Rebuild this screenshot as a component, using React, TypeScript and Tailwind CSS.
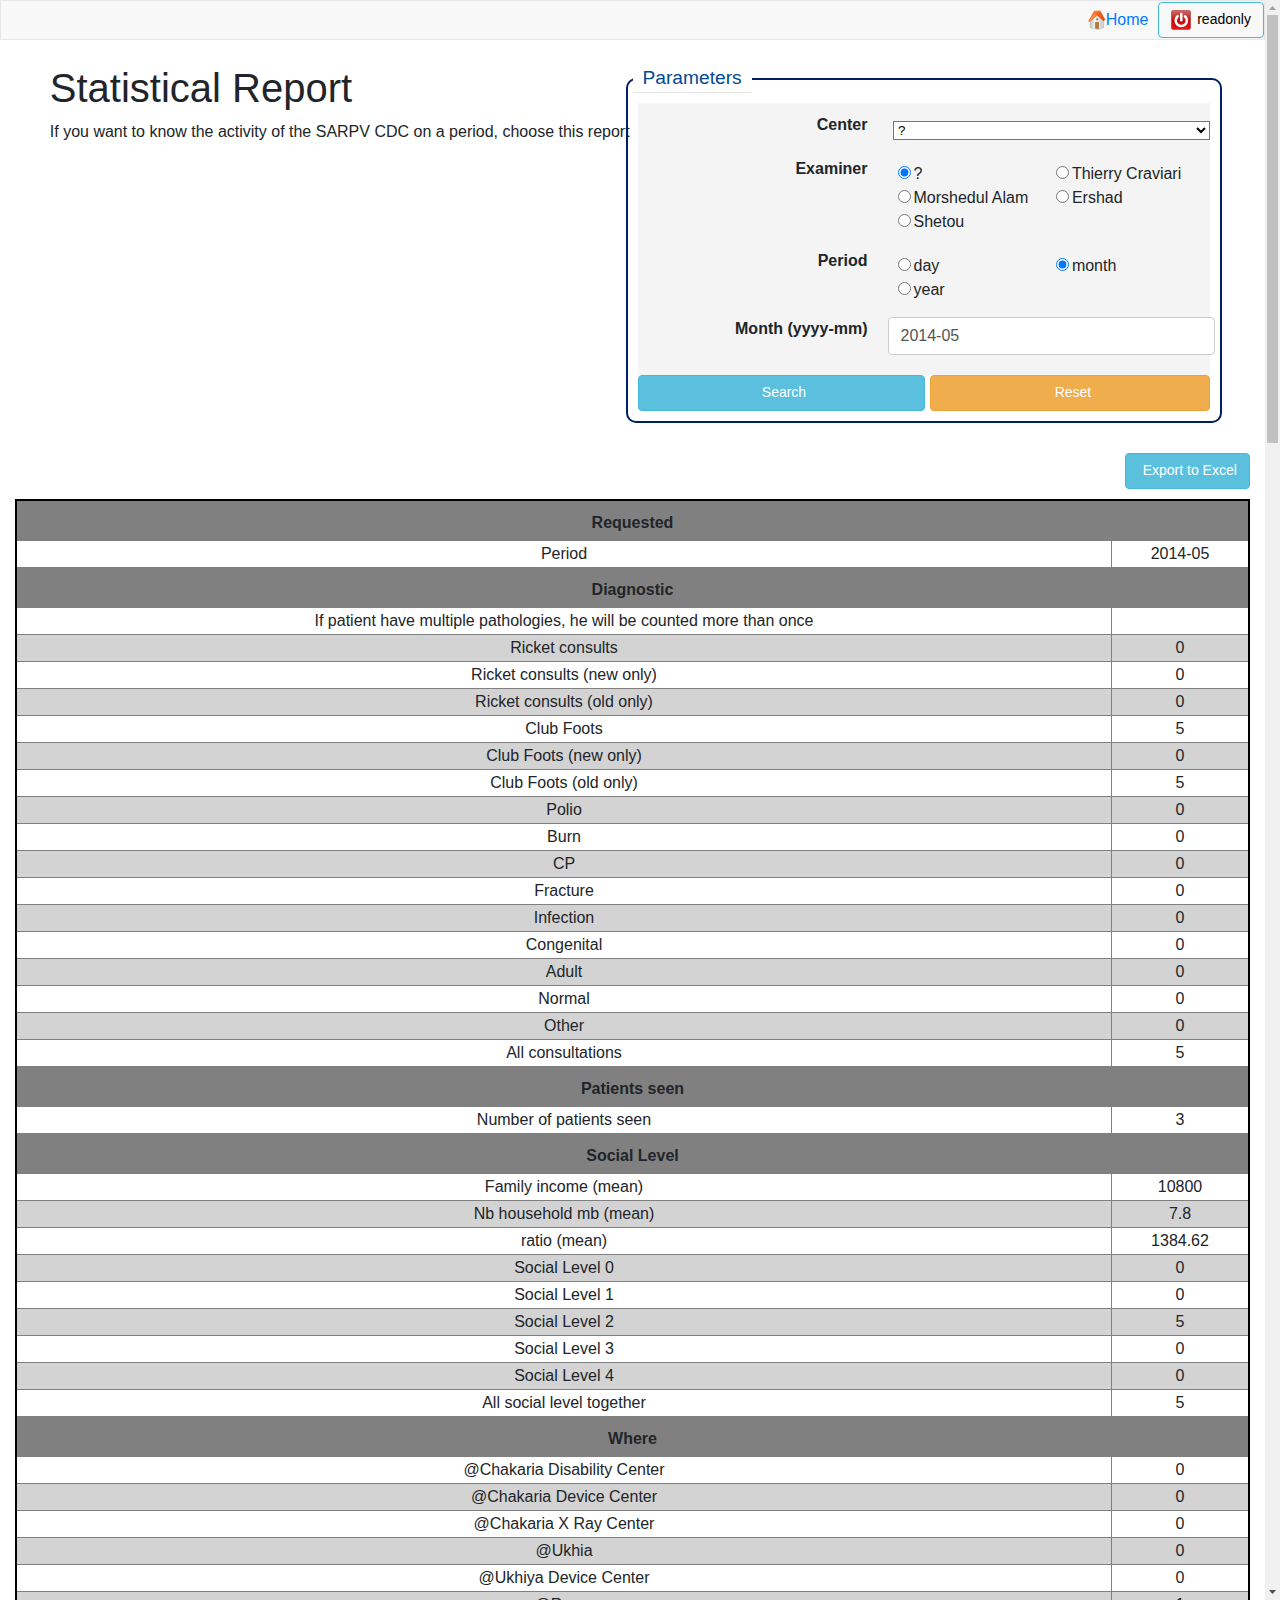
import React from "react";

type Row = [string, string];
type Section = { title: string; rows: Row[] };

const sections: Section[] = [
  { title: "Requested", rows: [["Period", "2014-05"]] },
  {
    title: "Diagnostic",
    rows: [
      ["If patient have multiple pathologies, he will be counted more than once", ""],
      ["Ricket consults", "0"],
      ["Ricket consults (new only)", "0"],
      ["Ricket consults (old only)", "0"],
      ["Club Foots", "5"],
      ["Club Foots (new only)", "0"],
      ["Club Foots (old only)", "5"],
      ["Polio", "0"],
      ["Burn", "0"],
      ["CP", "0"],
      ["Fracture", "0"],
      ["Infection", "0"],
      ["Congenital", "0"],
      ["Adult", "0"],
      ["Normal", "0"],
      ["Other", "0"],
      ["All consultations", "5"],
    ],
  },
  { title: "Patients seen", rows: [["Number of patients seen", "3"]] },
  {
    title: "Social Level",
    rows: [
      ["Family income (mean)", "10800"],
      ["Nb household mb (mean)", "7.8"],
      ["ratio (mean)", "1384.62"],
      ["Social Level 0", "0"],
      ["Social Level 1", "0"],
      ["Social Level 2", "5"],
      ["Social Level 3", "0"],
      ["Social Level 4", "0"],
      ["All social level together", "5"],
    ],
  },
  {
    title: "Where",
    rows: [
      ["@Chakaria Disability Center", "0"],
      ["@Chakaria Device Center", "0"],
      ["@Chakaria X Ray Center", "0"],
      ["@Ukhia", "0"],
      ["@Ukhiya Device Center", "0"],
      ["@Ramu", "1"],
    ],
  },
];

function HomeIcon() {
  return (
    <svg className="h-5 w-[18px] shrink-0" viewBox="0 0 18 20">
      <defs>
        <linearGradient id="roof" x1="0" y1="0" x2="0.6" y2="1">
          <stop offset="0" stopColor="#ffa45e" />
          <stop offset="0.5" stopColor="#f4611b" />
          <stop offset="1" stopColor="#e04e12" />
        </linearGradient>
        <linearGradient id="wall" x1="0" y1="0" x2="1" y2="0">
          <stop offset="0" stopColor="#c4c4c0" />
          <stop offset="0.4" stopColor="#f7f6f3" />
          <stop offset="1" stopColor="#c9c9c5" />
        </linearGradient>
      </defs>
      <path d="M2.100 11 8.900 5.200 15.500 10.500v7.300l-5.400 1.700-8-1.700z" fill="url(#wall)" stroke="#a9a9a4" strokeWidth="0.4" />
      <path d="M6 .8 12.300.4 17.200 9.600 15.700 11.200 9.100 5.600 2.100 11.800.3 11.200z" fill="url(#roof)" />
      <path d="M9.100 5.600 2.100 11.800.3 11.200 5.900 3.600z" fill="#fb8a4a" />
      <path d="M7.100 12h3.800v7.300l-3.800-.7z" fill="#b07a45" />
      <path d="M8.100 8.400h2.200v1.800H8.100z" fill="#8d8178" />
    </svg>
  );
}

function PowerIcon() {
  return (
    <svg className="h-5 w-5 shrink-0" viewBox="0 0 20 20">
      <defs>
        <linearGradient id="power" x1="0" y1="0" x2="0" y2="1">
          <stop offset="0" stopColor="#cf6a66" />
          <stop offset="0.45" stopColor="#c01c1c" />
          <stop offset="0.55" stopColor="#c80808" />
          <stop offset="1" stopColor="#e41818" />
        </linearGradient>
      </defs>
      <rect x="0.4" y="0.4" width="19.2" height="19.2" rx="2" fill="url(#power)" stroke="#b04040" strokeWidth="0.7" />
      <path d="M6.600 6.200A5.600 5.600 0 1 0 14 6.200" fill="none" stroke="#fff" strokeWidth="2.500" strokeLinecap="round" />
      <path d="M10.300 4v6.200" stroke="#fff" strokeWidth="2.500" strokeLinecap="round" />
    </svg>
  );
}

function Radio({ name, label, checked }: { name: string; label: string; checked?: boolean }) {
  return (
    <label className="flex h-6">
      <input type="radio" name={name} defaultChecked={checked} className="mt-[5px] mr-[2.500px] h-[13px] w-[13px] shrink-0" />
      <span className="pt-px whitespace-nowrap">{label}</span>
    </label>
  );
}

function Label({ children }: { children: React.ReactNode }) {
  return <div className="w-[229.5px] shrink-0 text-right font-bold">{children}</div>;
}

function Scrollbar() {
  return (
    <div className="flex h-[1600px] w-[15px] shrink-0 flex-col items-center justify-between bg-[#f1f1f1]">
      <div className="flex flex-col items-center">
        <svg className="h-[15px] w-[15px]" viewBox="0 0 15 15">
          <path d="M4 10h7L7.500 6z" fill="#a3a3a3" />
        </svg>
        <div className="h-[428px] w-[11px] bg-[#c1c1c1]" />
      </div>
      <svg className="h-[15px] w-[15px]" viewBox="0 0 15 15">
        <path d="M4 5h7L7.500 9z" fill="#505050" />
      </svg>
    </div>
  );
}

export default function App() {
  return (
    <div className="flex h-[1600px] w-[1280px] overflow-hidden bg-white font-['Liberation_Sans',Arial,sans-serif] text-base leading-6 text-[#212529]">
      <div className="w-[1265px] shrink-0">
        <nav className="flex h-10 items-center justify-end border border-[#e7e7e7] bg-[#f8f8f8]">
          <a className="mr-[9.500px] flex items-center text-[#007bff]">
            <HomeIcon />
            Home
          </a>
          <button className="flex h-9 w-[106px] items-center rounded border border-[#46b8da] pl-3 text-sm text-black">
            <PowerIcon />
            <span className="ml-[6.200px] pb-[3px]">readonly</span>
          </button>
        </nav>

        <div className="flex h-[413px] pl-[49.800px]">
          <header className="w-[576.200px] shrink-0 pt-[24px]">
            <h1 className="mb-2 text-[40px] leading-[48px]">Statistical Report</h1>
            <p className="whitespace-nowrap">If you want to know the activity of the SARPV CDC on a period, choose this report</p>
          </header>

          <div className="relative mt-[38px] h-[345px] w-[596px] rounded-[10px] border-2 border-[#001f62] px-[10px] pt-[23px]">
            <div className="absolute -top-[15px] left-[5px] h-[28px] w-[119px] border-b border-[#e5e5e5] bg-white pl-[9.500px] text-[19.2px] leading-[25px] text-[#004a95]">
              Parameters
            </div>
            <form className="h-[272px] w-[572px] bg-[#f4f4f4]">
              <div className="flex h-[44px] pt-[10px]">
                <Label>Center</Label>
                <select className="mt-[8px] ml-[25.500px] h-[19px] w-[317px] border border-[#767676] bg-white text-[13.333px] leading-4 text-black">
                  <option>?</option>
                </select>
              </div>
              <div className="flex h-[92px] pt-[10px]">
                <Label>Examiner</Label>
                <div className="ml-[30.500px] grid grid-cols-[158.400px_150px] content-start pt-[4px]">
                  <Radio name="examiner" label="?" checked />
                  <Radio name="examiner" label="Thierry Craviari" />
                  <Radio name="examiner" label="Morshedul Alam" />
                  <Radio name="examiner" label="Ershad" />
                  <Radio name="examiner" label="Shetou" />
                </div>
              </div>
              <div className="flex h-[68px] pt-[10px]">
                <Label>Period</Label>
                <div className="ml-[30.500px] grid grid-cols-[158.400px_150px] content-start pt-[4px]">
                  <Radio name="period" label="day" />
                  <Radio name="period" label="month" checked />
                  <Radio name="period" label="year" />
                </div>
              </div>
              <div className="flex h-[68px] pt-[10px]">
                <Label>Month (yyyy-mm)</Label>
                <input
                  defaultValue="2014-05"
                  className="ml-[20.500px] h-[38px] w-[327px] shrink-0 rounded border border-[#ccc] bg-white px-[11.500px] text-[#555]"
                />
              </div>
            </form>
            <div className="flex gap-[5px] text-sm text-white">
              <button className="h-9 w-[287px] rounded border border-[#46b8da] bg-[#5bc0de] pb-[3px] pl-[5px]">Search</button>
              <button className="h-9 w-[280px] rounded border border-[#eea236] bg-[#f0ad4e] pb-[3px] pl-[6px]">Reset</button>
            </div>
          </div>
        </div>

        <div className="mr-[15px] flex justify-end">
          <button className="h-9 w-[125px] rounded border border-[#46b8da] bg-[#5bc0de] pb-[3px] pl-[4.500px] text-sm text-white">
            Export to Excel
          </button>
        </div>

        <div className="mx-[15px] mt-[10px] border-2 border-black text-center">
          {sections.map((s) => (
            <section key={s.title}>
              <h2 className="h-10 bg-[#808080] pt-[10px] font-bold">{s.title}</h2>
              {s.rows.map(([label, value]) => (
                <div key={label} className="flex h-[27px] border-b border-[#808080] even:bg-white odd:bg-[#d3d3d3]">
                  <div className="w-[1095px] border-r border-[#808080] pt-px">{label}</div>
                  <div className="w-[136px] pt-px">{value}</div>
                </div>
              ))}
            </section>
          ))}
        </div>
      </div>
      <Scrollbar />
    </div>
  );
}
